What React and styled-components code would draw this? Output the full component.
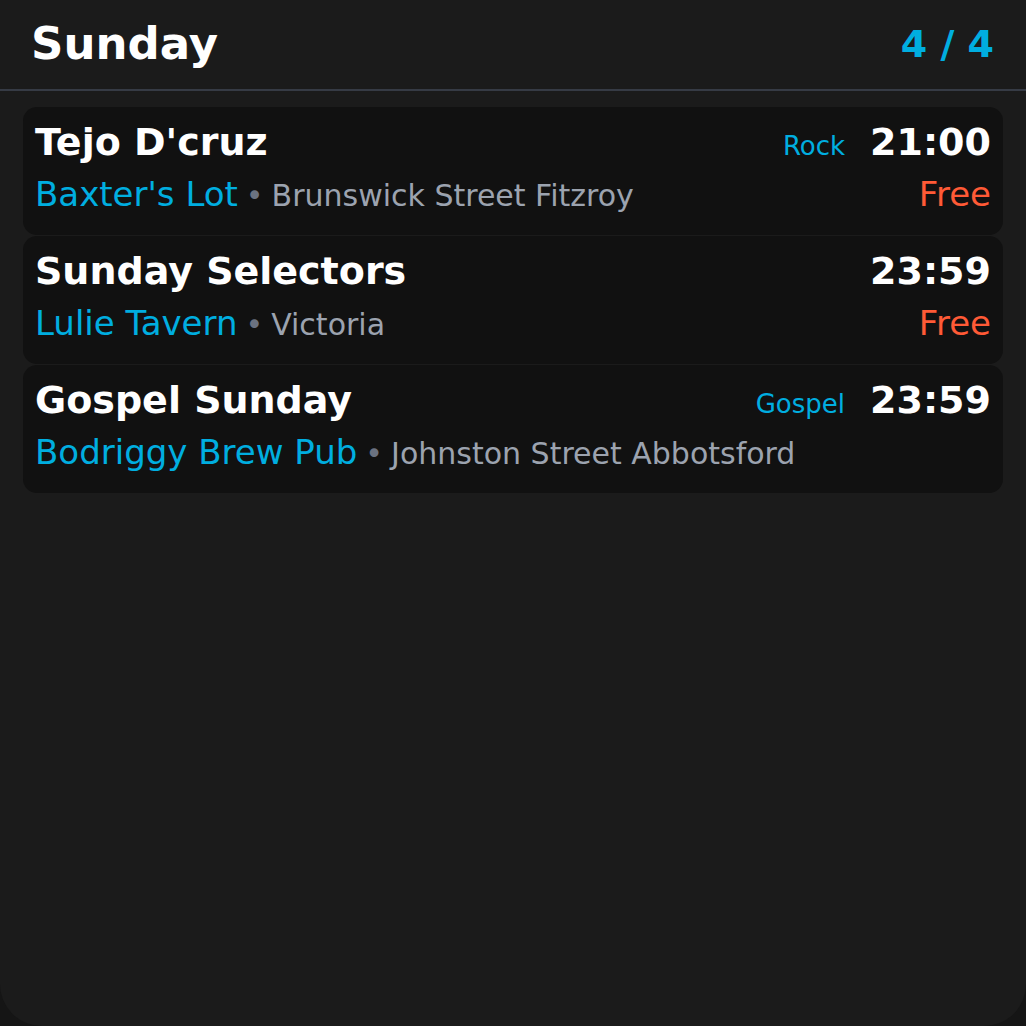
import React from "react";
import styled, { createGlobalStyle } from "styled-components";

const GlobalStyle = createGlobalStyle`
  html, body {
    margin: 0;
    padding: 0;
    background: #151515;
  }
  * { box-sizing: border-box; }
`;

const Screen = styled.div`
  width: 1026px;
  height: 1026px;
  background: #1b1b1b;
  border-radius: 0 0 42px 42px;
  font-family: "DejaVu Sans", sans-serif;
  overflow: hidden;
`;

const Header = styled.div`
  display: flex;
  align-items: center;
  justify-content: space-between;
  height: 91px;
  padding: 0 32px 2px 31px;
  border-bottom: 2px solid #363b45;
`;

const DayTitle = styled.h1`
  margin: 0;
  font-size: 45px;
  font-weight: 700;
  color: #ffffff;
`;

const Counter = styled.span`
  font-size: 38px;
  font-weight: 700;
  color: #00aee0;
`;

const List = styled.div`
  display: flex;
  flex-direction: column;
  gap: 1px;
  padding: 16px 23px;
`;

const Card = styled.div`
  display: flex;
  flex-direction: column;
  gap: 10px;
  height: 128px;
  padding: 13px 12px 0 12px;
  background: #111111;
  border-radius: 14px;
`;

const Row = styled.div`
  display: flex;
  align-items: baseline;
  justify-content: space-between;
  white-space: nowrap;
`;

const Title = styled.span`
  font-size: 38px;
  font-weight: 700;
  color: #ffffff;
`;

const Side = styled.div`
  display: flex;
  align-items: baseline;
  gap: 25px;
`;

const Genre = styled.span`
  font-size: 26px;
  color: #00aee0;
`;

const Time = styled.span`
  font-size: 38px;
  font-weight: 700;
  color: #ffffff;
`;

const Venue = styled.span`
  font-size: 34px;
  color: #00aee0;
`;

const Dot = styled.span`
  font-size: 30px;
  color: #6b7280;
  margin: 0 8px;
`;

const Address = styled.span`
  font-size: 30px;
  color: #9ca3af;
`;

const Price = styled.span`
  font-size: 34px;
  color: #ff5a36;
`;

const gigs = [
  { title: "Tejo D'cruz", genre: "Rock", time: "21:00", venue: "Baxter's Lot", address: "Brunswick Street Fitzroy", price: "Free" },
  { title: "Sunday Selectors", time: "23:59", venue: "Lulie Tavern", address: "Victoria", price: "Free" },
  { title: "Gospel Sunday", genre: "Gospel", time: "23:59", venue: "Bodriggy Brew Pub", address: "Johnston Street Abbotsford" },
];

export default function App() {
  return (
    <>
      <GlobalStyle />
      <Screen>
        <Header>
          <DayTitle>Sunday</DayTitle>
          <Counter>4 / 4</Counter>
        </Header>
        <List>
          {gigs.map((g, i) => (
            <Card key={i}>
              <Row>
                <Title>{g.title}</Title>
                <Side>
                  {g.genre ? <Genre>{g.genre}</Genre> : null}
                  <Time>{g.time}</Time>
                </Side>
              </Row>
              <Row>
                <span>
                  <Venue>{g.venue}</Venue>
                  <Dot>•</Dot>
                  <Address>{g.address}</Address>
                </span>
                {g.price ? <Price>{g.price}</Price> : null}
              </Row>
            </Card>
          ))}
        </List>
      </Screen>
    </>
  );
}
